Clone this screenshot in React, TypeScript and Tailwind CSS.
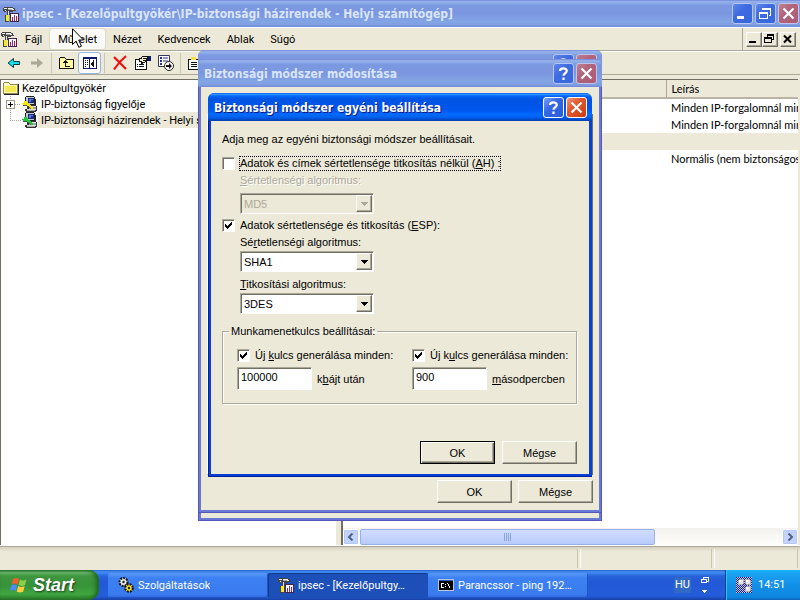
import { useId, type ReactNode } from 'react';

const MENU_ITEMS = ['Fájl', 'Művelet', 'Nézet', 'Kedvencek', 'Ablak', 'Súgó'];

const POLICIES = [
  { description: 'Minden IP-forgalomnál min', selected: false },
  { description: 'Minden IP-forgalomnál min', selected: false },
  { description: '', selected: true },
  { description: 'Normális (nem biztonságos', selected: false },
];

const TITLE_ACTIVE =
  'bg-[linear-gradient(#0058ee_0%,#3593ff_4%,#288eff_6%,#127dff_8%,#0369fc_10%,#0262ee_14%,#0057e5_20%,#0054e3_24%,#0055eb_56%,#005bf5_66%,#026afe_76%,#0062ef_86%,#0052d6_92%,#0040ab_100%)]';
const TITLE_INACTIVE =
  'bg-[linear-gradient(#7284da_0%,#97b4e9_6%,#8aa8e6_12%,#7b99e1_20%,#7a96df_50%,#82a5e4_80%,#7f9fe2_92%,#7288d8_100%)]';
const SUNKEN =
  'border border-t-[#aca899] border-l-[#aca899] border-r-white border-b-white shadow-[inset_1px_1px_#716f64]';
const RAISED =
  'border border-t-white border-l-white border-r-[#716f64] border-b-[#716f64] shadow-[inset_-1px_-1px_#aca899]';

/* ---------- icons ---------- */

function ConsoleIcon() {
  return (
    <svg className="size-4 shrink-0" viewBox="0 0 16 16" shapeRendering="crispEdges">
      <path d="M1 1h9v1h2v2h1v1h-3v1H6V5H3v1H1V5H0V2h1z" fill="#444" />
      <path d="M1 2h3v1H1zM5 2h5v1H5zM2 4h1v1H2zM5 3h6v1H5z" fill="#f4f4f4" />
      <path d="M5 3h4v1H5z" fill="#a8a8a8" />
      <path d="M4 5h3v4h-1v7H2V9h2z" fill="#444" />
      <path d="M5 5h1v4H5z" fill="#ddd" />
      <path d="M3 9h3v6H3z" fill="#f6ea1a" />
      <path d="M7 7h9v9H7z" fill="#4a2050" />
      <path d="M8 8h7v7H8z" fill="#fff" />
      <path d="M9 11h1v4H9zM13 10h1v5h-1z" fill="#d01818" />
      <path d="M11 9h1v6h-1z" fill="#5a3ccc" />
    </svg>
  );
}

function FolderIcon() {
  return (
    <svg className="size-4 shrink-0" viewBox="0 0 16 16" shapeRendering="crispEdges">
      <path d="M0 3h1V2h5v1h1v1h8v10H0z" fill="#8f8a4c" />
      <path d="M1 3h5v1h1v1h7v8H1z" fill="#fffbc0" />
      <path d="M2 6h11v6H2z" fill="#f6ea50" />
      <path d="M15 4h1v11H1v-1h14z" fill="#222" />
    </svg>
  );
}

function ComputerIcon({ active }: { active?: boolean }) {
  return (
    <svg className="size-4 shrink-0" viewBox="0 0 16 16" shapeRendering="crispEdges">
      <path d="M4 0h8v1H4zM3 1h1v7H3zM12 1h1v7h-1zM13 3h1v6h-1zM4 8h9v1H4z" fill="#222" />
      <path d="M4 1h8v7H4z" fill="#c4c8d0" />
      <path d="M6 2h6v5H6z" fill="#1c2c7c" />
      <path d="M7 3h4v1H7zM7 4h2v2H7z" fill="#5a7ce0" />
      <path d="M6 9h8v1h1v5h-1v1H4v-1H3v-2h2v-2h1z" fill="#333" />
      <path d="M7 10h7v1H7zM5 13h9v1H5z" fill="#e0e0e0" />
      <path d="M7 11h7v2H7zM5 14h8v1H5z" fill="#a4a4a4" />
      <path
        d="M2 5h3v1h1v2h2v1h1v1h1v1h1v2H9v-1H8v-1H7v-1H5V9H1V8H0V7h2z"
        fill={active ? '#22c83a' : '#f8e808'}
      />
      <path d="M1 9h4v1h2v1h1v1h1v1H8v-1H7v-1H5v-1H1z" fill="#555" />
    </svg>
  );
}

function GearsIcon() {
  return (
    <svg className="size-4 shrink-0" viewBox="0 0 16 16">
      <circle cx="5.5" cy="5" r="4" fill="#e8e8e8" stroke="#111" strokeWidth="2" strokeDasharray="2 1" />
      <circle cx="5.5" cy="5" r="1.2" fill="#222" />
      <circle cx="11" cy="11" r="3.8" fill="#f4e23c" stroke="#111" strokeWidth="2" strokeDasharray="2 1" />
      <circle cx="11" cy="11" r="1.2" fill="#222" />
    </svg>
  );
}

function PromptIcon() {
  return (
    <svg className="size-4 shrink-0" viewBox="0 0 16 16" shapeRendering="crispEdges">
      <path d="M0 2h16v12H0z" fill="#b8c4d8" />
      <path d="M1 3h14v1H1z" fill="#2a5cc8" />
      <path d="M1 4h14v9H1z" fill="#000" />
      <path
        d="M3 6h3v1H4v3h2v1H3V6zM7 7h1v1H7zM7 9h1v1H7zM9 6h1v1h1v2h1v2h-1V9h-1V7H9z"
        fill="#fff"
      />
    </svg>
  );
}

function ArrowIcon({ forward }: { forward?: boolean }) {
  return forward ? (
    <svg className="h-3 w-4" viewBox="0 0 16 12">
      <path d="M2 4.5h6V1l6 5-6 5V7.5H2z" fill="#aca899" />
    </svg>
  ) : (
    <svg className="h-3 w-4" viewBox="0 0 16 12">
      <path d="M13.5 4.500H7.500V1.500L2 6l5.500 4.500V7.500h6z" fill="#19e0ea" stroke="#063c40" />
    </svg>
  );
}

function UpFolderIcon() {
  return (
    <svg className="size-4" viewBox="0 0 16 16" shapeRendering="crispEdges">
      <path d="M0 3h1V2h5v1h1v1h8v10H0z" fill="#111" />
      <path d="M1 3h5v1h1v1h7v8H1z" fill="#fdf9a0" />
      <path d="M6 5h1v1h1v1h1v1H7v3h4v1H6V8H4V7h1V6h1z" fill="#111" />
    </svg>
  );
}

function TreeToggleIcon() {
  return (
    <svg className="size-4" viewBox="0 0 16 16" shapeRendering="crispEdges">
      <path d="M1 2h14v12H1z" fill="#10186e" />
      <path d="M2 4h5v9H2zM8 4h6v9H8z" fill="#fff" />
      <path d="M3 5h1v1H3zM5 5h1v1H5zM3 7h1v1H3zM5 7h1v1H5zM3 9h1v1H3zM5 9h1v1H5zM3 11h1v1H3z" fill="#111" />
      <path d="M12 5v7h-1v-1h-1v-1H9V8h1V7h1V5z" fill="#111" />
    </svg>
  );
}

function DeleteIcon() {
  return (
    <svg className="size-4" viewBox="0 0 16 16">
      <path d="M2 2l12 12M14 1C9 5 5 10 2 14.500" stroke="#f01010" strokeWidth="2.200" fill="none" />
    </svg>
  );
}

function PropertiesIcon() {
  return (
    <svg className="size-4" viewBox="0 0 16 16" shapeRendering="crispEdges">
      <path d="M0 4h12v11H0z" fill="#111" />
      <path d="M1 5h10v9H1z" fill="#fff" />
      <path d="M2 9h1v1H2zM4 9h5v1H4zM2 11h1v1H2zM4 11h5v1H4z" fill="#111" />
      <path d="M4 3h2V2h1V1h6v5h-2v1h-1v1H8v1H6V7H4z" fill="#111" />
      <path d="M7 2h5v1H8v1h3v1H8v1h2v1H7V6H5V4h2z" fill="#f6f0d0" />
      <path d="M13 1h3v5h-3z" fill="#10186e" />
    </svg>
  );
}

function ExportIcon() {
  return (
    <svg className="size-4" viewBox="0 0 16 16">
      <path d="M.5.500h11v11H.5z" fill="#fff" stroke="#333a5c" />
      <path d="M2 2h2v2H2zM2 5h2v2H2zM2 8h2v2H2zM5 2.500h5v1H5zM5 5.500h5v1H5z" fill="#26308c" />
      <circle cx="11" cy="11" r="4.500" fill="#fff" stroke="#222" />
      <path d="M8 10h3V8l3 3-3 3v-2H8z" fill="#111" />
    </svg>
  );
}

function ClipboardIcon() {
  return (
    <svg className="size-4" viewBox="0 0 16 16" shapeRendering="crispEdges">
      <path d="M0 4h13v11H0z" fill="#111" />
      <path d="M1 5h11v9H1z" fill="#fff" />
      <path d="M3 7h6v1H3zM3 9h6v1H3zM3 11h6v1H3z" fill="#111" />
      <path d="M3 4V2h5v3H3z" fill="#f4e23c" />
    </svg>
  );
}

function WindowsFlag() {
  return (
    <svg className="h-[18px] w-5 shrink-0" viewBox="0 0 20 18">
      <path d="M4 3c2-1.500 4-1.500 6 0L8.500 8.500c-2-1.300-4-1.300-6 0z" fill="#f0602c" />
      <path d="M11 3.500c2 1.200 4 1.200 6.500 0L16 9c-2 1.200-4 1.200-6.500 0z" fill="#8cd04a" />
      <path d="M2.200 9.500c2-1.300 4-1.300 6 0L6.700 15c-2-1.300-4-1.300-6 0z" fill="#4c8cf4" />
      <path d="M9.200 10c2 1.200 4 1.200 6.500 0l-1.500 5.500c-2 1.200-4 1.200-6.500 0z" fill="#fcd03c" />
    </svg>
  );
}

function TrayIcon() {
  return (
    <svg className="size-4 shrink-0" viewBox="0 0 16 16" shapeRendering="crispEdges">
      <defs>
        <pattern id="tray-dots" width="2" height="2" patternUnits="userSpaceOnUse">
          <path d="M0 0h2v2H0z" fill="#c4caf4" />
          <path d="M0 0h1v1H0zM1 1h1v1H1z" fill="#1c1c8c" />
        </pattern>
      </defs>
      <path d="M0 0h16v16H0z" fill="url(#tray-dots)" />
      <path d="M3 2h4v1h1v4H7v1H3V7H2V3h1zM10 2h4v1h1v4h-1v1h-4V7H9V3h1zM10 9h4v1h1v4h-1v1h-4v-1H9v-4h1z" fill="#a8a8a8" />
      <path d="M3 3h4v4H3zM10 3h4v4h-4zM10 10h4v4h-4z" fill="#e4e4e4" />
      <path d="M3 3h2v2H3zM10 3h2v2h-2zM10 10h2v2h-2z" fill="#fff" />
    </svg>
  );
}

/* ---------- shared controls ---------- */

type CaptionKind = 'minimize' | 'restore' | 'help' | 'close';

const CAPTION_LABELS: Record<CaptionKind, string> = {
  minimize: 'Kis méret',
  restore: 'Előző méret',
  help: 'Súgó',
  close: 'Bezárás',
};

function CaptionButton({ kind, inactive }: { kind: CaptionKind; inactive?: boolean }) {
  let tone = 'bg-[linear-gradient(135deg,#7ba0f5,#3468e4_40%,#2a5be0)] border-white';
  if (inactive) tone = 'bg-[linear-gradient(135deg,#5f86ea,#3f6be0_40%,#3a66dc)] border-[#b4c6f2]';
  if (kind === 'close') {
    tone = inactive
      ? 'bg-[linear-gradient(135deg,#c08090,#b0647c_40%,#ac5c74)] border-[#c4c4e8]'
      : 'bg-[linear-gradient(135deg,#f09878,#e4562e_40%,#cc3c10)] border-white';
  }
  return (
    <button
      aria-label={CAPTION_LABELS[kind]}
      className={`flex size-[21px] items-center justify-center rounded-[3px] border ${tone}`}
    >
      <svg className="size-[19px]" viewBox="0 0 19 19" fill="none" stroke="#fff">
        {kind === 'minimize' && <path d="M4 13.500h7" strokeWidth="3" />}
        {kind === 'restore' && (
          <path d="M6.500 6V4.500h8v7H13M6 5h9M3.500 8.500h8v6h-8zM3 9h9" shapeRendering="crispEdges" />
        )}
        {kind === 'help' && (
          <path
            d="M6 7C6 3.500 12.800 3.500 12.800 7c0 2.300-3.300 2.200-3.300 4.800M9.500 13.500v2.500"
            strokeWidth="2.200"
          />
        )}
        {kind === 'close' && <path d="M4.500 4.500l10 10M14.500 4.500l-10 10" strokeWidth="2.200" />}
      </svg>
    </button>
  );
}

function PushButton({ children, isDefault }: { children: ReactNode; isDefault?: boolean }) {
  return (
    <button
      className={`h-[23px] w-[75px] bg-[#ece9d8] ${
        isDefault
          ? 'border border-black shadow-[inset_1px_1px_#fff,inset_-1px_-1px_#716f64,inset_-2px_-2px_#aca899]'
          : RAISED
      }`}
    >
      {children}
    </button>
  );
}

function CheckBox({ children, checked, focused }: { children: ReactNode; checked?: boolean; focused?: boolean }) {
  return (
    <label className="flex items-center gap-1 whitespace-nowrap">
      <span className="grid">
        <input
          type="checkbox"
          defaultChecked={checked}
          className={`peer col-start-1 row-start-1 size-[13px] appearance-none bg-white ${SUNKEN}`}
        />
        <svg
          className="pointer-events-none invisible col-start-1 row-start-1 size-[13px] peer-checked:visible"
          viewBox="0 0 13 13"
          shapeRendering="crispEdges"
        >
          <path d="M3 5h1v1h1v1h1V6h1V5h1V4h1V3h1v3H9v1H8v1H7v1H6v1H5V9H4V8H3z" />
        </svg>
      </span>
      <span className={`border border-dotted leading-[13px] ${focused ? 'border-black' : 'border-transparent'}`}>
        {children}
      </span>
    </label>
  );
}

interface DropDownProps {
  label: ReactNode;
  value: string;
  disabled?: boolean;
}

function DropDown({ label, value, disabled }: DropDownProps) {
  const id = useId();
  return (
    <div className={`flex flex-col items-start pl-[18px] ${disabled ? 'gap-[6px]' : 'gap-[2px]'}`}>
      <label htmlFor={id} className={disabled ? 'text-[#aca899] [text-shadow:1px_1px_#fff]' : ''}>
        {label}
      </label>
      <span className="grid w-[134px]">
        <select
          id={id}
          disabled={disabled}
          className={`col-start-1 row-start-1 h-[21px] appearance-none bg-white pl-[3px] disabled:bg-[#ece9d8] disabled:text-[#aca899] disabled:opacity-100 ${SUNKEN}`}
        >
          <option>{value}</option>
        </select>
        <span
          className={`pointer-events-none col-start-1 row-start-1 my-[2px] mr-[2px] flex w-4 items-center justify-center justify-self-end bg-[#ece9d8] ${RAISED}`}
        >
          <svg className="h-1 w-[7px]" viewBox="0 0 7 4" shapeRendering="crispEdges">
            <path d="M0 0h7v1H6v1H5v1H4v1H3V3H2V2H1V1H0z" fill={disabled ? '#aca899' : '#000'} />
          </svg>
        </span>
      </span>
    </div>
  );
}

function KeyLifetime({ toggle, value, unit }: { toggle: ReactNode; value: string; unit: ReactNode }) {
  const id = useId();
  return (
    <div className="flex flex-col gap-1">
      <CheckBox checked>{toggle}</CheckBox>
      <div className="flex items-center gap-[5px]">
        <input id={id} defaultValue={value} className={`h-[23px] w-[75px] bg-white px-[3px] pb-1 ${SUNKEN}`} />
        <label htmlFor={id}>{unit}</label>
      </div>
    </div>
  );
}

/* ---------- main window ---------- */

function MainTitleBar() {
  return (
    <header className={`flex h-[27px] shrink-0 items-center gap-[3px] pr-[1px] pl-[3px] ${TITLE_INACTIVE}`}>
      <ConsoleIcon />
      <h1 className="flex-1 truncate font-['DejaVu_Sans_Condensed','DejaVu_Sans',sans-serif] text-[12px] font-bold text-[#dbe5fa]">
        ipsec - [Kezelőpultgyökér\IP-biztonsági házirendek - Helyi számítógép]
      </h1>
      <div className="flex gap-[2px]">
        <CaptionButton kind="minimize" inactive />
        <CaptionButton kind="restore" inactive />
        <CaptionButton kind="close" inactive />
      </div>
    </header>
  );
}

function MenuBar() {
  return (
    <nav className="flex h-6 shrink-0 border-t border-b border-t-white border-b-[#aca899]">
      <div className="flex flex-1 items-center pl-[1px]">
        <ConsoleIcon />
        {MENU_ITEMS.map((item) => (
          <button
            key={item}
            className={`h-5 px-2 pt-px ${
              item === 'Művelet'
                ? 'rounded-[3px] bg-[#fafaf6] shadow-[0_0_1px_1px_#dedbc9]'
                : ''
            }`}
          >
            {item}
          </button>
        ))}
      </div>
      <div className="flex items-center border-l border-[#aca899] pr-1 pl-[3px]">
        <button aria-label="Kis méret" className={`h-[15px] w-4 ${RAISED}`}>
          <svg className="size-3" viewBox="0 0 12 12" shapeRendering="crispEdges">
            <path d="M2 8h7v2H2z" />
          </svg>
        </button>
        <button aria-label="Előző méret" className={`h-[15px] w-4 ${RAISED}`}>
          <svg className="size-3" viewBox="0 0 12 12" fill="none" stroke="#000" shapeRendering="crispEdges">
            <path d="M4.500 4V1.500h6v5H9M4 2.500h7M1.500 4.500h7v5h-7zM1 5.500h8" />
          </svg>
        </button>
        <button aria-label="Bezárás" className={`ml-[2px] h-[15px] w-4 ${RAISED}`}>
          <svg className="size-3" viewBox="0 0 12 12" stroke="#000" strokeWidth="2">
            <path d="M3 2.500l7 7M10 2.500l-7 7" />
          </svg>
        </button>
      </div>
    </nav>
  );
}

function ToolButton({ label, children, pressed }: { label: string; children: ReactNode; pressed?: boolean }) {
  return (
    <button
      aria-label={label}
      className={`flex h-[22px] w-[23px] items-center justify-center rounded-[3px] border ${
        pressed ? 'border-[#98b5e2] bg-white' : 'border-transparent'
      }`}
    >
      {children}
    </button>
  );
}

function ToolDivider() {
  return <span className="mx-[3px] h-5 w-px bg-[#c9c5b2]" />;
}

function ToolBar() {
  return (
    <div className="flex h-6 shrink-0 items-center border-t border-b border-t-white border-b-[#aca899] pl-[2px]">
      <ToolButton label="Vissza"><ArrowIcon /></ToolButton>
      <ToolButton label="Előre"><ArrowIcon forward /></ToolButton>
      <ToolDivider />
      <ToolButton label="Fel"><UpFolderIcon /></ToolButton>
      <ToolButton label="Konzolfa" pressed><TreeToggleIcon /></ToolButton>
      <ToolDivider />
      <ToolButton label="Törlés"><DeleteIcon /></ToolButton>
      <ToolButton label="Tulajdonságok"><PropertiesIcon /></ToolButton>
      <ToolButton label="Exportálás"><ExportIcon /></ToolButton>
      <ToolDivider />
      <ToolButton label="Új"><ClipboardIcon /></ToolButton>
    </div>
  );
}

function ConsoleTree() {
  return (
    <ul className="w-[336px] shrink-0 overflow-hidden border-t border-l border-[#716f64] bg-white whitespace-nowrap">
      <li className="flex h-4 items-center pl-[2px]">
        <FolderIcon />
        <span className="pt-[2px] pl-[3px]">Kezelőpultgyökér</span>
      </li>
      <li className="flex h-4 items-center pl-[5px]">
        <svg className="h-4 w-4 shrink-0" viewBox="0 0 16 16" shapeRendering="crispEdges">
          <path d="M4.500 0v16M9 8.500h6" stroke="#aca899" strokeDasharray="1 1" />
          <path d="M.5 4.500h8v8h-8z" fill="#fff" stroke="#9c9a8c" />
          <path d="M2 8.500h5M4.500 6v5" stroke="#000" />
        </svg>
        <ComputerIcon />
        <span className="pt-[2px] pl-[3px]">IP-biztonság figyelője</span>
      </li>
      <li className="flex h-4 items-center pl-[5px]">
        <svg className="h-4 w-4 shrink-0" viewBox="0 0 16 16" shapeRendering="crispEdges">
          <path d="M4.500 0v9M4 8.500h11" stroke="#aca899" strokeDasharray="1 1" />
        </svg>
        <ComputerIcon active />
        <span className="flex h-4 flex-1 items-center bg-[#ece9d8] pt-[2px] pl-[3px]">
          IP-biztonsági házirendek - Helyi számítógép
        </span>
      </li>
    </ul>
  );
}

function ScrollButton({ label, right }: { label: string; right?: boolean }) {
  return (
    <button
      aria-label={label}
      className="flex size-4 items-center justify-center rounded-[2px] border border-white bg-[#c4d3fb] shadow-[inset_0_0_0_1px_#b4c8f6]"
    >
      <svg className="size-2" viewBox="0 0 8 8" fill="none" stroke="#4d6185" strokeWidth="2">
        <path d={right ? 'M2.500.5L6 4 2.500 7.500' : 'M5.500.5L2 4l3.500 3.500'} />
      </svg>
    </button>
  );
}

function PolicyList() {
  return (
    <section className="flex min-w-0 flex-1 flex-col overflow-hidden border-t border-l-2 border-[#716f64] bg-white">
      <div className="flex-1 overflow-hidden">
        <table className="w-full table-fixed border-collapse text-left font-['Lato',sans-serif] whitespace-nowrap">
          <thead>
            <tr className="h-[18px] bg-[#ece9d8]">
              <th
                scope="col"
                aria-label="Név"
                className="w-[323px] border-r border-b-2 border-r-[#aca899] border-b-[#b8b5a4]"
              />
              <th
                scope="col"
                className="border-b-2 border-l border-b-[#b8b5a4] border-l-white pl-[5px] font-normal"
              >
                Leírás
              </th>
            </tr>
          </thead>
          <tbody>
            {POLICIES.map((policy, i) => (
              <tr key={i} className={`h-[17px] ${policy.selected ? 'bg-[#ece9d8]' : ''}`}>
                <td />
                <td className="pt-px pl-[5px]">{policy.description}</td>
              </tr>
            ))}
          </tbody>
        </table>
      </div>
      <div className="flex h-[17px] items-center bg-[linear-gradient(#f3f1ec,#fefefb)]">
        <ScrollButton label="Görgetés balra" />
        <div className="flex flex-1 px-px">
          <div className="flex h-4 w-[70%] items-center justify-center gap-[1px] rounded-[2px] border border-[#98b0e8] bg-[linear-gradient(#cfdcfe,#b9cbfa)]">
            <span className="h-2 w-px bg-[#8ca4dc]" />
            <span className="h-2 w-px bg-[#8ca4dc]" />
            <span className="h-2 w-px bg-[#8ca4dc]" />
            <span className="h-2 w-px bg-[#8ca4dc]" />
          </div>
        </div>
        <ScrollButton label="Görgetés jobbra" right />
      </div>
    </section>
  );
}

function StatusBar() {
  return (
    <footer className="flex h-6 shrink-0 gap-[2px] border-t border-[#aca899] bg-[linear-gradient(#d4d1c0,#ece9d8_20%)] py-[2px] pr-[2px]">
      <span className="flex-1 border-r border-[#c9c5b2]" />
      <span className="w-[132px] border-r border-l border-r-[#c9c5b2] border-l-white" />
      <span className="w-[84px] border-r border-l border-r-[#c9c5b2] border-l-white" />
    </footer>
  );
}

/* ---------- dialogs ---------- */

function DialogTitle({ children, inactive }: { children?: ReactNode; inactive?: boolean }) {
  return (
    <header
      className={`flex h-7 items-center gap-[2px] rounded-t-[6px] pr-[5px] pl-[6px] ${
        inactive ? `text-[#dbe5fa] ${TITLE_INACTIVE}` : `text-white ${TITLE_ACTIVE}`
      }`}
    >
      <h2
        className={`flex-1 truncate pt-[2px] font-['DejaVu_Sans_Condensed','DejaVu_Sans',sans-serif] text-[12px] font-bold ${
          inactive ? '' : '[text-shadow:1px_1px_#0a1883]'
        }`}
      >
        {children}
      </h2>
      <CaptionButton kind="help" inactive={inactive} />
      <CaptionButton kind="close" inactive={inactive} />
    </header>
  );
}

/* property sheet that lies almost entirely under the other two dialogs */
function SheetDialog() {
  return (
    <section className="absolute top-[50px] left-[198px] w-[404px] rounded-t-[7px] bg-[#6b78d4] shadow-[inset_0_0_0_1px_#5558b8]">
      <DialogTitle inactive />
      <div className="mx-[3px] h-[440px] bg-[#ece9d8]" />
      <div className="h-[3px]" />
    </section>
  );
}

function MethodDialog() {
  return (
    <section className="absolute top-[59px] left-[198px] w-[404px] rounded-t-[7px] bg-[#6b78d4] shadow-[inset_0_0_0_1px_#5558b8]">
      <DialogTitle inactive>Biztonsági módszer módosítása</DialogTitle>
      <div className="mx-[3px] bg-[#ece9d8] px-[6px] pt-[27px] pb-[7px]">
        <div className="h-[361px] border-r-2 border-b border-l border-r-[#716f64] border-b-[#716f64] border-l-white" />
        <div className="flex justify-end gap-[6px] pt-[5px]">
          <PushButton>OK</PushButton>
          <PushButton>Mégse</PushButton>
        </div>
      </div>
      <div className="h-[3px]" />
    </section>
  );
}

function CustomMethodDialog() {
  return (
    <section className="absolute top-[93px] left-[208px] w-[384px] rounded-t-[7px] bg-[#0a3fd4] shadow-[inset_1px_-1px_#001ea0]">
      <DialogTitle>Biztonsági módszer egyéni beállítása</DialogTitle>
      <form className="mx-[3px] flex flex-col bg-[#ece9d8] pt-[11px] pr-3 pb-[10px] pl-[11px] leading-[14px]">
        <p>Adja meg az egyéni biztonsági módszer beállításait.</p>
        <div className="flex flex-col gap-[2px] pt-[10px]">
          <CheckBox focused>
            Adatok és címek sértetlensége titkosítás nélkül (<u>A</u>H) :
          </CheckBox>
          <DropDown label={<><u>S</u>értetlenségi algoritmus:</>} value="MD5" disabled />
        </div>
        <div className="flex flex-col gap-[2px] pt-1">
          <CheckBox checked>
            Adatok sértetlensége és titkosítás (<u>E</u>SP):
          </CheckBox>
          <DropDown label={<>Sé<u>r</u>tetlenségi algoritmus:</>} value="SHA1" />
        </div>
        <div className="pt-[5px]">
          <DropDown label={<><u>T</u>itkosítási algoritmus:</>} value="3DES" />
        </div>
        <fieldset className="mt-[10px] grid h-[80px] min-w-0 grid-cols-[175px_1fr] border border-[#aca899] pt-[10px] pl-[14px] shadow-[1px_1px_#fff,inset_1px_1px_#fff]">
          <legend className="-ml-2 px-[2px]">Munkamenetkulcs beállításai:</legend>
          <KeyLifetime toggle={<>Új <u>k</u>ulcs generálása minden:</>} value="100000" unit={<>k<u>b</u>ájt után</>} />
          <KeyLifetime toggle={<>Új k<u>u</u>lcs generálása minden:</>} value="900" unit={<><u>m</u>ásodpercben</>} />
        </fieldset>
        <div className="flex justify-end gap-[7px] pt-[37px]">
          <PushButton isDefault>OK</PushButton>
          <PushButton>Mégse</PushButton>
        </div>
      </form>
      <div className="h-[3px]" />
    </section>
  );
}

/* ---------- taskbar ---------- */

function TaskButton({ icon, children, active }: { icon: ReactNode; children: ReactNode; active?: boolean }) {
  return (
    <button
      className={`flex h-[25px] w-40 items-center gap-1 rounded-[2px] px-[10px] ${
        active
          ? 'bg-[#1c4fb8] shadow-[inset_1px_1px_#123a8c]'
          : 'bg-[linear-gradient(#5a98f8,#3c80f2_20%,#3a7cf0_85%,#2c62d8)] shadow-[inset_-1px_-1px_#2454c4]'
      }`}
    >
      {icon}
      <span className="truncate pt-px">{children}</span>
    </button>
  );
}

function TaskBar() {
  return (
    <footer className="flex h-[30px] shrink-0 items-stretch bg-[linear-gradient(#2a5cc8_0%,#3f8cf0_6%,#3a80ec_12%,#2663da_20%,#2258d5_40%,#245ddb_86%,#1941a5_100%)] text-white">
      <button className="flex w-[99px] items-center gap-1 rounded-r-[10px] bg-[linear-gradient(#2f7a30_0%,#6cb86c_8%,#3f9640_20%,#379238_50%,#3fa640_80%,#2c7a2c_100%)] pl-[9px] shadow-[inset_-3px_0_4px_#1e6420]">
        <WindowsFlag />
        <span className="font-['Liberation_Sans',sans-serif] text-[18px] font-bold italic [text-shadow:1px_1px_2px_#1a401a]">
          Start
        </span>
      </button>
      <div className="flex flex-1 items-center pl-[9px]">
        <TaskButton icon={<GearsIcon />}>Szolgáltatások</TaskButton>
        <TaskButton icon={<ConsoleIcon />} active>ipsec - [Kezelőpultgy…</TaskButton>
        <TaskButton icon={<PromptIcon />}>Parancssor - ping 192…</TaskButton>
      </div>
      <div className="flex items-center gap-[10px] pr-4">
        <span className="bg-[#316ac5] px-[1px]">HU</span>
        <svg className="h-[18px] w-2" viewBox="0 0 8 18" fill="none" stroke="#fff" shapeRendering="crispEdges">
          <path d="M2.500 3V1.500h5v4H6M.5 3.500h5v3h-5z" />
          <path d="M1 14h5v1H5v1H4v1H3v-1H2v-1H1z" fill="#fff" stroke="none" />
        </svg>
      </div>
      <div className="flex w-[75px] items-center gap-[6px] border-l border-[#0a3a9c] bg-[linear-gradient(#18b4f4_0%,#1aa0f0_15%,#1290e8_50%,#0f86e0_90%,#0c62b8_100%)] pl-[10px] shadow-[inset_1px_0_#2cc8fa]">
        <TrayIcon />
        <time>14:51</time>
      </div>
    </footer>
  );
}

export default function App() {
  return (
    <div className="relative flex h-screen flex-col overflow-hidden bg-[#ece9d8] font-['Roboto',sans-serif] text-[11px] leading-[16px] text-black">
      <MainTitleBar />
      <MenuBar />
      <ToolBar />
      <main className="mt-1 flex min-h-0 flex-1 gap-[5px] border-b border-white pr-[2px]">
        <ConsoleTree />
        <PolicyList />
      </main>
      <StatusBar />
      <TaskBar />
      <div className="font-['Liberation_Sans',sans-serif]">
        <SheetDialog />
        <MethodDialog />
        <CustomMethodDialog />
      </div>
      {/* mouse pointer */}
      <svg className="absolute top-[28px] left-[72px] h-[21px] w-3" viewBox="0 0 12 21">
        <path d="M.5.800v15.700l3.600-3.400 2.700 6.200 2.600-1.100L6.700 12h4.800z" fill="#fff" stroke="#000" />
      </svg>
    </div>
  );
}
